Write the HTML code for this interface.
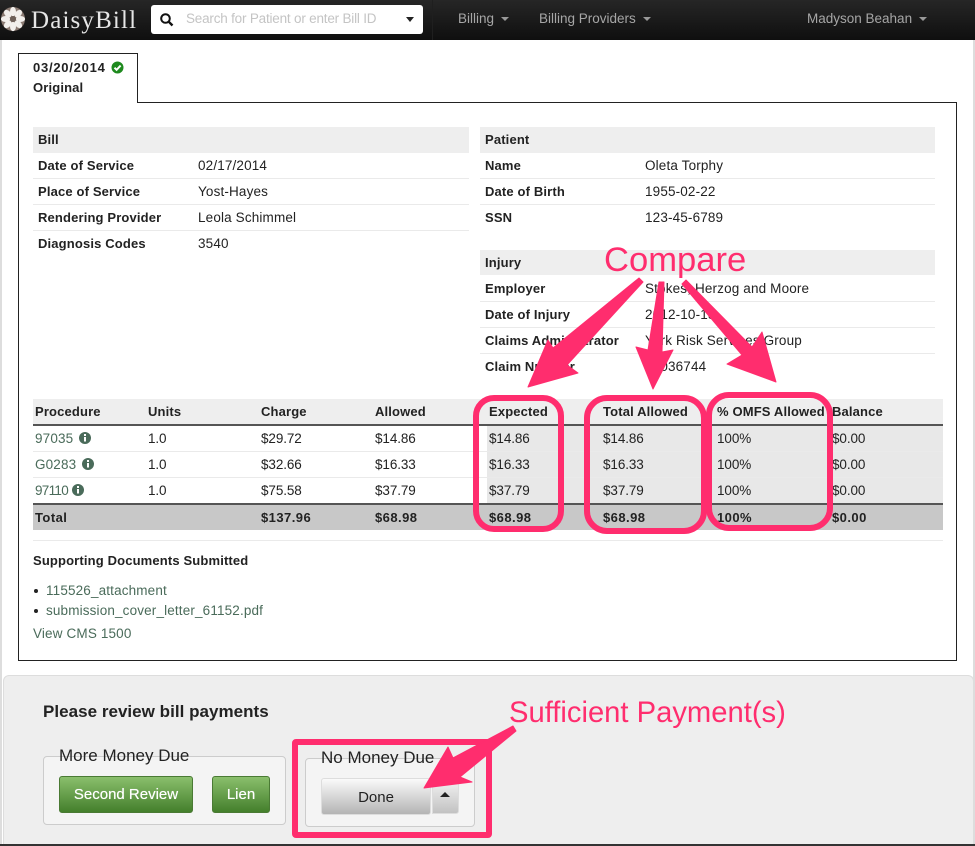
<!DOCTYPE html>
<html><head><meta charset="utf-8"><style>
html,body{margin:0;padding:0}
body{width:975px;height:846px;position:relative;overflow:hidden;background:#fff;font:13px/20px "Liberation Sans",sans-serif;color:#222}
.a{position:absolute}
.t{position:absolute;white-space:nowrap;line-height:20px;height:20px;margin-top:1px}
span.t{font-size:13.5px;letter-spacing:.15px}
b.t{font-weight:bold;letter-spacing:.15px}
.r span.t{letter-spacing:-.1px}
.r b.t{letter-spacing:.45px}
.l{color:#4a6b5a}
.nav{color:#a6a6a6;font-size:13.5px}
.c{position:absolute;width:0;height:0;border-left:4px solid transparent;border-right:4px solid transparent;border-top:4px solid #999}
.sep{position:absolute;height:1px;background:#eaeaea}
.hd{position:absolute;background:#eee}
</style></head><body>
<div class="a" style="left:0;top:0;width:2px;height:846px;background:#ddd"></div>
<div class="a" style="left:973px;top:40px;width:2px;height:806px;background:#ddd"></div>

<div class="a" style="left:0;top:0;width:975px;height:40px;background:linear-gradient(#262626,#0f0f0f)"></div>
<svg class="a" style="left:0;top:0" width="30" height="40" viewBox="0 0 30 40">
<circle cx="13" cy="19" r="12" fill="#8a7a72"/>
<g fill="#f2efec"><ellipse cx="13" cy="11.5" rx="3" ry="4.6"/><ellipse cx="13" cy="26.5" rx="3" ry="4.6"/><ellipse cx="5.5" cy="19" rx="4.6" ry="3"/><ellipse cx="20.5" cy="19" rx="4.6" ry="3"/><ellipse cx="7.7" cy="13.7" rx="3" ry="4.4" transform="rotate(-45 7.7 13.7)"/><ellipse cx="18.3" cy="13.7" rx="3" ry="4.4" transform="rotate(45 18.3 13.7)"/><ellipse cx="7.7" cy="24.3" rx="3" ry="4.4" transform="rotate(45 7.7 24.3)"/><ellipse cx="18.3" cy="24.3" rx="3" ry="4.4" transform="rotate(-45 18.3 24.3)"/></g>
<circle cx="13" cy="19" r="3" fill="#6d5f58"/>
</svg>
<div class="a" style="left:31px;top:9px;font:25px/24px 'Liberation Serif',serif;height:24px;color:#e6e6e6;letter-spacing:1.15px;white-space:nowrap">DaisyBill</div>
<div class="a" style="left:151px;top:5px;width:272px;height:29px;background:#fff;border-radius:3px"></div>
<svg class="a" style="left:159px;top:12px" width="16" height="16" viewBox="0 0 16 16"><circle cx="6.5" cy="6.5" r="4.3" fill="none" stroke="#111" stroke-width="2"/><path d="M9.7 9.7L13.5 13.5" stroke="#111" stroke-width="2.4"/></svg>
<div class="t" style="left:186px;top:8px;color:#c4c4c4;font-size:13.5px;letter-spacing:-.2px">Search for Patient or enter Bill ID</div>
<div class="c" style="left:406px;top:17px;border-left-width:4px;border-right-width:4px;border-top:5px solid #222"></div>
<div class="a" style="left:432px;top:0;width:1px;height:40px;background:#1f1f1f"></div>
<div class="t nav" style="left:458px;top:8px">Billing</div><div class="c" style="left:501px;top:17px"></div>
<div class="t nav" style="left:539px;top:8px">Billing Providers</div><div class="c" style="left:643px;top:17px"></div>
<div class="t nav" style="left:807px;top:8px">Madyson Beahan</div><div class="c" style="left:919px;top:17px"></div>

<div class="a" style="left:18px;top:102px;width:937px;height:557px;border:1px solid #222"></div>
<div class="a" style="left:18px;top:53px;width:118px;height:49px;border:1px solid #222;border-bottom:0;background:#fff"></div>
<div class="a" style="left:19px;top:102px;width:118px;height:1px;background:#fff"></div>
<b class="t" style="left:33px;top:57px;letter-spacing:.75px">03/20/2014</b>
<svg class="a" style="left:111px;top:61px" width="13" height="13" viewBox="0 0 13 13"><circle cx="6.5" cy="6.5" r="6" fill="#1e8a1e"/><path d="M3.5 6.7L5.6 8.8L9.6 4.6" fill="none" stroke="#fff" stroke-width="2"/></svg>
<b class="t" style="left:33px;top:77px">Original</b>

<div class="hd" style="left:33px;top:127px;width:436px;height:26px"></div>
<div class="hd" style="left:480px;top:127px;width:455px;height:26px"></div>
<div class="hd" style="left:480px;top:250px;width:455px;height:25px"></div>
<div class="sep" style="left:33px;top:178px;width:436px"></div><div class="sep" style="left:33px;top:204px;width:436px"></div><div class="sep" style="left:33px;top:230px;width:436px"></div>
<div class="sep" style="left:480px;top:178px;width:455px"></div><div class="sep" style="left:480px;top:204px;width:455px"></div>
<div class="sep" style="left:480px;top:301px;width:455px"></div><div class="sep" style="left:480px;top:327px;width:455px"></div><div class="sep" style="left:480px;top:353px;width:455px"></div>

<b class="t" style="left:38px;top:129px">Bill</b>
<b class="t" style="left:38px;top:155px">Date of Service</b><span class="t" style="left:198px;top:155px">02/17/2014</span>
<b class="t" style="left:38px;top:181px">Place of Service</b><span class="t" style="left:198px;top:181px">Yost-Hayes</span>
<b class="t" style="left:38px;top:207px">Rendering Provider</b><span class="t" style="left:198px;top:207px">Leola Schimmel</span>
<b class="t" style="left:38px;top:233px">Diagnosis Codes</b><span class="t" style="left:198px;top:233px">3540</span>

<b class="t" style="left:485px;top:129px">Patient</b>
<b class="t" style="left:485px;top:155px">Name</b><span class="t" style="left:645px;top:155px">Oleta Torphy</span>
<b class="t" style="left:485px;top:181px">Date of Birth</b><span class="t" style="left:645px;top:181px">1955-02-22</span>
<b class="t" style="left:485px;top:207px">SSN</b><span class="t" style="left:645px;top:207px">123-45-6789</span>
<b class="t" style="left:485px;top:252px">Injury</b>
<b class="t" style="left:485px;top:278px">Employer</b><span class="t" style="left:645px;top:278px">Stokes, Herzog and Moore</span>
<b class="t" style="left:485px;top:304px">Date of Injury</b><span class="t" style="left:645px;top:304px">2012-10-15</span>
<b class="t" style="left:485px;top:330px">Claims Administrator</b><span class="t" style="left:645px;top:330px">York Risk Services Group</span>
<b class="t" style="left:485px;top:356px">Claim Number</b><span class="t" style="left:645px;top:356px">94036744</span>

<div class="hd" style="left:33px;top:399px;width:910px;height:25px"></div>
<div class="a" style="left:487px;top:426px;width:456px;height:77px;background:#e8e8e8"></div>
<div class="sep" style="left:33px;top:451px;width:910px"></div><div class="sep" style="left:33px;top:477px;width:910px"></div>
<div class="a" style="left:33px;top:424px;width:910px;height:2px;background:#555"></div>
<div class="a" style="left:33px;top:503px;width:910px;height:2px;background:#555"></div>
<div class="a" style="left:33px;top:505px;width:910px;height:25px;background:#c8c8c8"></div>
<div class="sep" style="left:33px;top:540px;width:910px"></div>

<b class="t" style="left:35px;top:401px">Procedure</b><b class="t" style="left:148px;top:401px">Units</b><b class="t" style="left:261px;top:401px">Charge</b><b class="t" style="left:375px;top:401px">Allowed</b><b class="t" style="left:489px;top:401px">Expected</b><b class="t" style="left:603px;top:401px">Total Allowed</b><b class="t" style="left:717px;top:401px">% OMFS Allowed</b><b class="t" style="left:832px;top:401px">Balance</b>

<div class="r">
<span class="t l" style="left:35px;top:428px;letter-spacing:.15px">97035</span><span class="t" style="left:148px;top:428px">1.0</span><span class="t" style="left:261px;top:428px">$29.72</span><span class="t" style="left:375px;top:428px">$14.86</span><span class="t" style="left:489px;top:428px">$14.86</span><span class="t" style="left:603px;top:428px">$14.86</span><span class="t" style="left:717px;top:428px">100%</span><span class="t" style="left:832px;top:428px">$0.00</span>
<span class="t l" style="left:35px;top:454px;letter-spacing:.15px">G0283</span><span class="t" style="left:148px;top:454px">1.0</span><span class="t" style="left:261px;top:454px">$32.66</span><span class="t" style="left:375px;top:454px">$16.33</span><span class="t" style="left:489px;top:454px">$16.33</span><span class="t" style="left:603px;top:454px">$16.33</span><span class="t" style="left:717px;top:454px">100%</span><span class="t" style="left:832px;top:454px">$0.00</span>
<span class="t l" style="left:35px;top:480px;letter-spacing:-.7px">97110</span><span class="t" style="left:148px;top:480px">1.0</span><span class="t" style="left:261px;top:480px">$75.58</span><span class="t" style="left:375px;top:480px">$37.79</span><span class="t" style="left:489px;top:480px">$37.79</span><span class="t" style="left:603px;top:480px">$37.79</span><span class="t" style="left:717px;top:480px">100%</span><span class="t" style="left:832px;top:480px">$0.00</span>
<b class="t" style="left:35px;top:507px">Total</b><b class="t" style="left:261px;top:507px">$137.96</b><b class="t" style="left:375px;top:507px">$68.98</b><b class="t" style="left:489px;top:507px">$68.98</b><b class="t" style="left:603px;top:507px">$68.98</b><b class="t" style="left:717px;top:507px">100%</b><b class="t" style="left:832px;top:507px">$0.00</b>
</div>

<svg class="a" style="left:0;top:0" width="100" height="500" viewBox="0 0 100 500">
<g><circle cx="85" cy="438" r="6" fill="#4a6b5a"/><circle cx="88" cy="464" r="6" fill="#4a6b5a"/><circle cx="78" cy="490" r="6" fill="#4a6b5a"/></g>
<g fill="#fff"><rect x="84" y="437" width="2" height="4.5"/><rect x="84" y="434" width="2" height="2"/><rect x="87" y="463" width="2" height="4.5"/><rect x="87" y="460" width="2" height="2"/><rect x="77" y="489" width="2" height="4.5"/><rect x="77" y="486" width="2" height="2"/></g>
</svg>

<b class="t" style="left:33px;top:550px">Supporting Documents Submitted</b>
<div class="a" style="left:34px;top:589px;width:4px;height:4px;border-radius:50%;background:#222"></div>
<div class="a" style="left:34px;top:609px;width:4px;height:4px;border-radius:50%;background:#222"></div>
<span class="t l" style="left:46px;top:580px">115526_attachment</span>
<span class="t l" style="left:46px;top:600px">submission_cover_letter_61152.pdf</span>
<span class="t l" style="left:33px;top:623px">View CMS 1500</span>

<div class="a" style="left:3px;top:675px;width:969px;height:169px;background:#eee;border:1px solid #ddd;border-bottom:0;border-radius:6px 6px 0 0;box-sizing:content-box"></div>
<div class="a" style="left:0;top:844px;width:975px;height:2px;background:#333"></div>
<b class="t" style="left:43px;top:701px;font-size:17px;letter-spacing:.03px">Please review bill payments</b>

<div class="a" style="left:43px;top:756px;width:241px;height:67px;background:#f4f4f4;border:1px solid #ccc;border-radius:4px"></div>
<div class="t" style="left:59px;top:745px;font-size:17px;background:#eee;height:10px;overflow:visible">More Money Due</div>
<div class="a" style="left:59px;top:776px;width:134px;height:37px;background:linear-gradient(#8abf6c,#447f2c);border:1px solid #4a7a34;box-sizing:border-box;border-radius:3px;color:#fff;font:15px/35px 'Liberation Sans',sans-serif;text-align:center;text-shadow:0 0 .5px #fff">Second Review</div>
<div class="a" style="left:212px;top:776px;width:58px;height:37px;background:linear-gradient(#8abf6c,#447f2c);border:1px solid #4a7a34;box-sizing:border-box;border-radius:3px;color:#fff;font:15px/35px 'Liberation Sans',sans-serif;text-align:center;text-shadow:0 0 .5px #fff">Lien</div>

<div class="a" style="left:305px;top:758px;width:168px;height:67px;background:#f4f4f4;border:1px solid #ccc;border-radius:4px"></div>
<div class="t" style="left:321px;top:747px;font-size:17px;background:#eee;height:10px;overflow:visible">No Money Due</div>
<div class="a" style="left:321px;top:778px;width:110px;height:37px;background:linear-gradient(#fafafa,#b4b4b4);border:1px solid #ddd;box-sizing:border-box;border-radius:3px;font:15px/37px 'Liberation Sans',sans-serif;text-align:center">Done</div>
<div class="a" style="left:432px;top:778px;width:27px;height:36px;background:linear-gradient(#f4f4f4,#c2c2c2);border:1px solid #ddd;box-sizing:border-box;border-radius:0 3px 3px 0"></div>
<div class="a" style="left:440px;top:792px;width:0;height:0;border-left:5px solid transparent;border-right:5px solid transparent;border-bottom:5px solid #222"></div>

<svg class="a" style="left:0;top:0" width="975" height="846" viewBox="0 0 975 846">
<g fill="none" stroke="#ff2d6e" stroke-width="6">
<rect x="476" y="398" width="85" height="131" rx="18"/>
<rect x="587" y="398" width="117" height="133" rx="20"/>
<rect x="709" y="395" width="121" height="133" rx="20"/>
<rect x="295" y="742" width="194" height="93" rx="1" stroke-linejoin="round"/>
</g>
<g fill="#ff2d6e" stroke="#ff2d6e" stroke-width="1" stroke-linejoin="round">
<polygon points="639,278 643,282 567,365 578,373 528,387 548,340 553,348"/>
<polygon points="659,282 664,282 662,352 673,350 653,389 636,347 648,350"/>
<polygon points="686,280 682,284 742,355 727,364 776,382 762,332 752,347"/>
<polygon points="513,726 516,731 460,777 472,782 424,788 448,747 453,758"/>
</g>
<text x="604" y="271" font-family="Liberation Sans, sans-serif" font-size="34.6" fill="#ff2d6e">Compare</text>
<text x="509" y="722" font-family="Liberation Sans, sans-serif" font-size="29.2" fill="#ff2d6e">Sufficient Payment(s)</text>
</svg>
</body></html>
